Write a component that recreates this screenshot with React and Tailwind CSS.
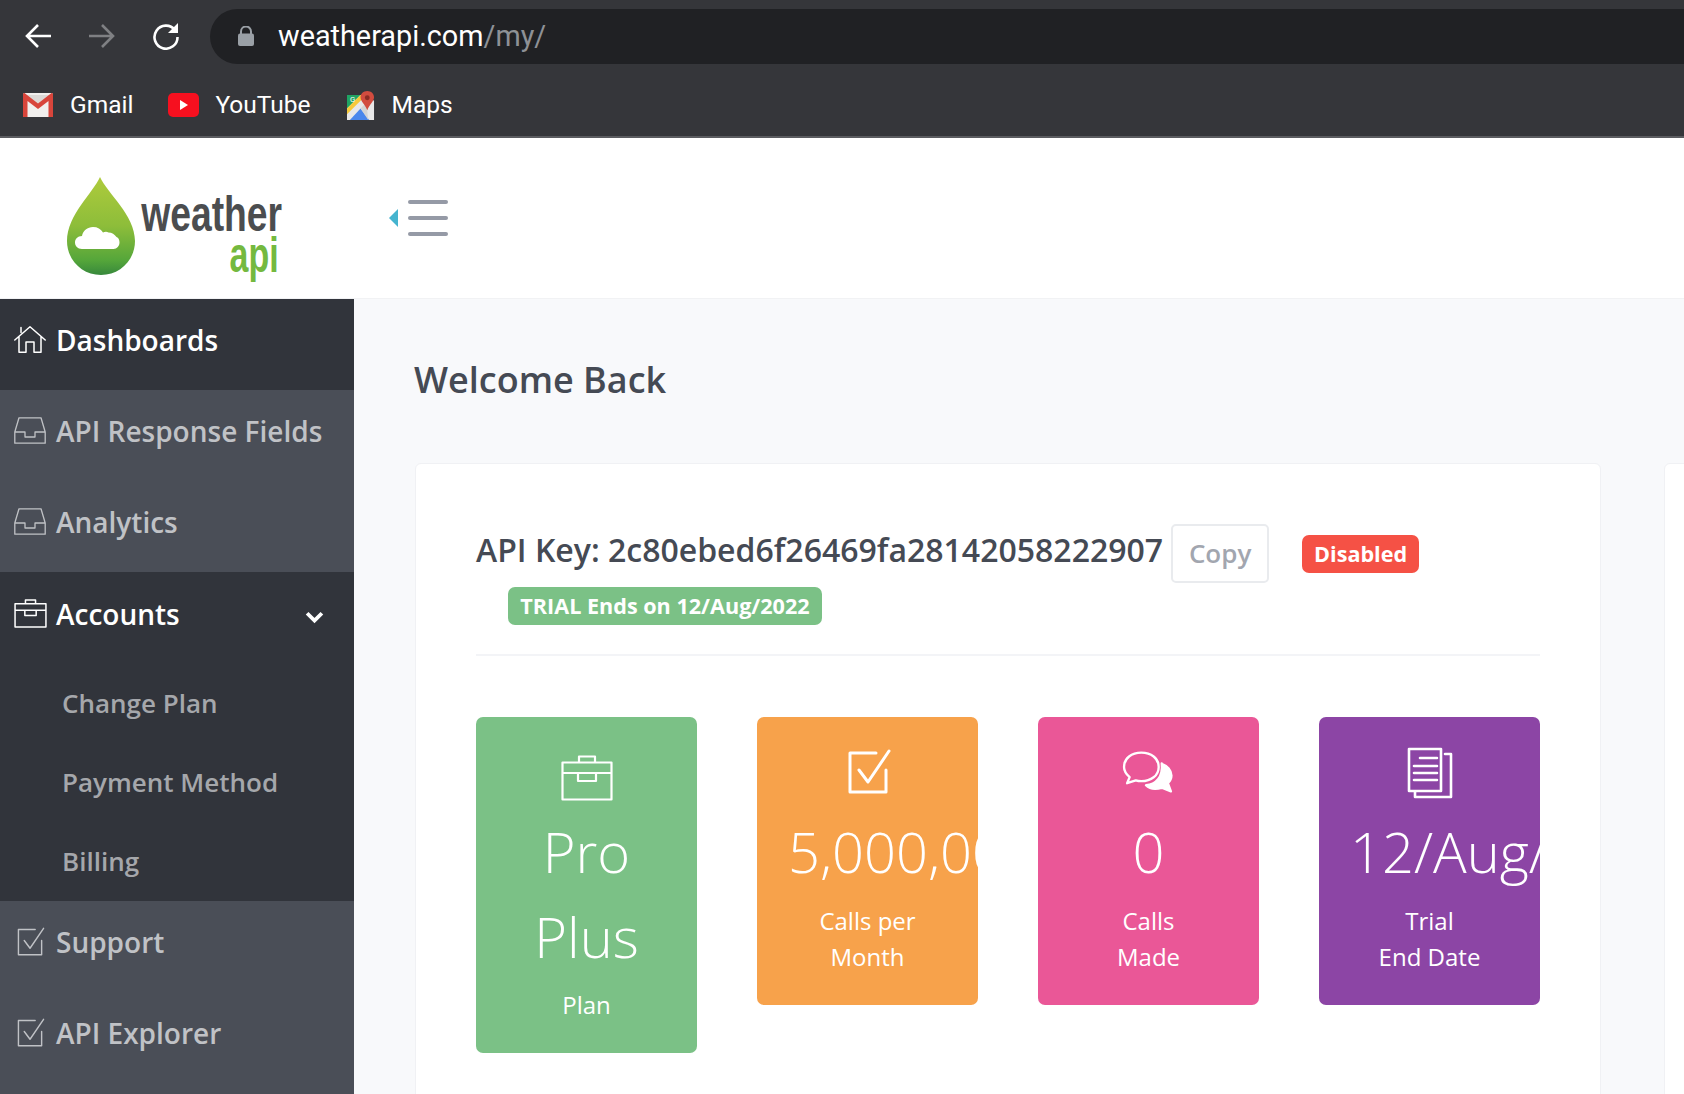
import React from "react";

const Stroke = ({ children, className, vb, sw }) => (
  <svg viewBox={vb} className={className} fill="none" stroke="currentColor" strokeWidth={sw} strokeLinecap="round" strokeLinejoin="round">{children}</svg>
);

const Home = ({ className, sw = 1.500 }) => (
  <Stroke className={className} vb="0 0 32 27" sw={sw}><path d="M.8 14 16 .8 31.200 14M7 6.500V1.500M5 10.500V26.200h7V16h8v10.200h7V10.500" /></Stroke>
);
const Inbox = ({ className, sw = 1.300 }) => (
  <Stroke className={className} vb="0 0 32 27" sw={sw}><path d="M.8 15 5 .8h22L31.200 15v11.200H.8zM.8 15H11v5h10v-5h10.200" /></Stroke>
);
const Case = ({ className, sw = 2.400 }) => (
  <Stroke className={className} vb="0 0 52 46" sw={sw}><path d="M1.500 7.500h49v37h-49zM1.500 18h49M18 7.500V1.500h16v6M17 18v8h18v-8" /></Stroke>
);
const Check = ({ className, sw = 2.200 }) => (
  <Stroke className={className} vb="0 0 43 45" sw={sw}><path d="M28 4H2v39h36V21" /><path d="M11 21l9 12L41 2" /></Stroke>
);
const Chat = ({ className }) => (
  <Stroke className={className} vb="0 0 52 44" sw={2.300}>
    <path d="M19 2c9.500 0 17 5.500 17 14s-7.500 14-17 14c-2 0-4-.3-5.500-.8L5 32l2.500-6C4 23 2 20 2 16 2 7.500 9.500 2 19 2z" />
    <path d="M39 13c5.500 2 9.500 6.500 9.500 11.500 0 3-1.300 5.500-3.500 7.500l3 8-9-3.500c-5 1.500-11.500 1.500-15.500-2.500 9.500-.5 17-8 15.500-21.500z" fill="currentColor" />
  </Stroke>
);
const Doc = ({ className }) => (
  <Stroke className={className} vb="0 0 46 52" sw={2.600}>
    <path d="M2 2h32v42H2zM38 7h6v43H8v-6" />
    <path d="M13 11h17M7 19h23M7 26h23M7 33h23" />
  </Stroke>
);

const Gmail = () => (
  <svg viewBox="0 0 30 24" className="w-[30px] h-[24px]">
    <rect width="30" height="24" rx="1.500" fill="#f1efed" />
    <path d="M3 2 15 13 27 2" fill="#dcd9d6" />
    <path d="M0 1.500C0 .5.7 0 1.500 0L15 10.500 28.500 0C29.300 0 30 .5 30 1.500V24h-4.500V8L15 16 4.500 8v16H0z" fill="#d8453b" />
  </svg>
);
const YouTube = () => (
  <svg viewBox="0 0 31 24" className="w-[31px] h-[24px]">
    <rect width="31" height="24" rx="5" fill="#f6101f" />
    <path d="M12 7l8 5-8 5z" fill="#fff" />
  </svg>
);
const Maps = () => (
  <svg viewBox="0 0 29 30" className="w-[28px] h-[29px]">
    <path d="M0 4h20l8 6v20H0z" fill="#e8e8e8" />
    <path d="M0 4h14L0 18z" fill="#1fa463" />
    <path d="M0 18 14 4h6L0 24z" fill="#f6c93a" />
    <path d="M3 30l11-12 9 12z" fill="#4a87ec" />
    <path d="M14 18 20 12l2 18z" fill="#d4d4d4" />
    <path d="M21 0c4 0 7 3 7 6.500C28 11 23 14 21 20c-2-6-7-9-7-13.500C14 3 17 0 21 0z" fill="#d24c3f" />
    <circle cx="21" cy="7" r="2.500" fill="#8c2c24" />
    <text x="3" y="11" fontSize="8" fontFamily="Roboto, sans-serif" fill="#fff">G</text>
  </svg>
);

const Drop = () => (
  <svg viewBox="0 0 68 98" className="w-[68px] h-[98px]">
    <defs>
      <linearGradient id="dropGrad" x1="0" y1="0" x2="0" y2="1">
        <stop offset="0" stopColor="#aecb3c" />
        <stop offset="0.5" stopColor="#8dbd3a" />
        <stop offset="0.85" stopColor="#55a63a" />
        <stop offset="1" stopColor="#37883c" />
      </linearGradient>
    </defs>
    <path d="M33 0C40 16 68 38 68 64c0 19-15 34-34 34S0 83 0 64C0 38 26 16 33 0z" fill="url(#dropGrad)" />
    <path d="M15 72c-4.500 0-7-3-7-6.500s2.500-6.500 7-6.500c1-5.500 5.500-9 11-9 4.500 0 8 2 10 5.500 2-1 4-1 5.500 0 3.500 0 6 2 8 4.500 2 .8 3 3 3 5.500 0 3.500-2.500 6.500-6 6.500z" fill="#fff" />
  </svg>
);

const SideItem = ({ icon: Icon, label, active, iconClass = "w-[32px] h-[27px] ml-[14px]", gap = "ml-[10px]", pb = "pb-[10px]", chevron }) => (
  <div className={`h-[91px] flex items-center ${pb} ${active ? "text-white" : "text-[#c0c2c6]"}`}>
    <Icon className={`${iconClass} shrink-0`} />
    <span className={`${gap} text-[28px] leading-[38px]`}>{label}</span>
    {chevron && (
      <svg viewBox="0 0 18 12" className="w-[19px] h-[13px] ml-auto mr-[30px] mt-[8px]" fill="none" stroke="#fff" strokeWidth="3.600">
        <path d="M2 2l7 7 7-7" />
      </svg>
    )}
  </div>
);

const SubItem = ({ label }) => (
  <div className="h-[79px] flex items-center pl-[62px] pt-[1px] text-[26px] text-[#a5a7ab]">{label}</div>
);

const tiles = [
  { bg: "bg-[#7bc186]", value: "Pro Plus", wrap: true, lines: ["Plan"], icon: <Case className="w-[52px] h-[46px] mt-[9px]" sw={2.200} />, h: "h-[336px]", gap: "mt-[8px]" },
  { bg: "bg-[#f7a24b]", value: "5,000,000", lines: ["Calls per", "Month"], icon: <Check className="w-[43px] h-[45px] ml-[4px] mb-[4px]" sw={3} />, h: "h-[288px]", gap: "mt-[9px]" },
  { bg: "bg-[#ea5797]", value: "0", lines: ["Calls", "Made"], icon: <Chat className="w-[53px] h-[46px]" />, h: "h-[288px]", gap: "mt-[9px]" },
  { bg: "bg-[#8c45a5]", value: "12/Aug/2022", lines: ["Trial", "End Date"], icon: <Doc className="w-[46px] h-[52px]" />, h: "h-[288px]", gap: "mt-[9px]" },
];

export default function App() {
  return (
    <div className="w-[1684px] h-[1094px] overflow-hidden flex flex-col bg-[#f8f9fb] font-['Open_Sans',sans-serif]">
      {/* Browser chrome */}
      <div className="h-[138px] shrink-0 bg-[#35363a] border-b-2 border-[#5b5c60] font-['Roboto',sans-serif] text-white">
        <div className="h-[72px] flex items-center">
          <svg viewBox="0 0 28 28" className="w-[28px] h-[28px] ml-[24px]" fill="none" stroke="#fff" strokeWidth="2.600"><path d="M27 14H3M14 3 3 14l11 11" /></svg>
          <svg viewBox="0 0 28 28" className="w-[28px] h-[28px] ml-[36px]" fill="none" stroke="#7f8083" strokeWidth="2.600"><path d="M1 14h24M14 3l11 11-11 11" /></svg>
          <svg viewBox="0 0 28 28" className="w-[28px] h-[28px] ml-[36px]" fill="none" stroke="#fff" strokeWidth="2.600"><path d="M23 8a11.500 11.500 0 1 0 2.500 7" /><path d="M26 1v10H16z" fill="#fff" stroke="none" /></svg>
          <div className="ml-[30px] flex-1 h-[55px] rounded-l-[28px] bg-[#202124] flex items-center">
            <svg viewBox="0 0 16 20" className="w-[16px] h-[20px] ml-[28px]"><path d="M3 8V5.500a5 5 0 0 1 10 0V8" fill="none" stroke="#9aa0a6" strokeWidth="2" /><rect y="7.500" width="16" height="12.500" rx="2" fill="#9aa0a6" /></svg>
            <span className="ml-[24px] pt-[2px] text-[28.800px]">weatherapi.com<span className="text-[#8e9196]">/my/</span></span>
          </div>
        </div>
        <div className="h-[64px] pt-[2px] flex items-center pl-[23px] text-[24.500px]">
          <Gmail />
          <span className="ml-[17px]">Gmail</span>
          <span className="ml-[35px]"><YouTube /></span>
          <span className="ml-[16px]">YouTube</span>
          <span className="ml-[36px]"><Maps /></span>
          <span className="ml-[17px]">Maps</span>
        </div>
      </div>

      {/* App header */}
      <div className="h-[161px] shrink-0 bg-white flex items-center border-b border-[#f1f2f4]">
        <div className="w-[389px] flex items-start h-full pl-[67px] pt-[39px] shrink-0">
          <Drop />
          <div className="ml-[6px] w-[141px] mt-[15px] font-['Liberation_Sans',sans-serif] font-bold">
            <div className="flex justify-end text-[50px] leading-[44px] text-[#4b4d4f] origin-right scale-x-[0.745] whitespace-nowrap">weather</div>
            <div className="flex justify-end text-[50px] leading-[38px] text-[#74b93f] pr-[5px] origin-right scale-x-[0.68] whitespace-nowrap">api</div>
          </div>
        </div>
        <div className="flex items-center">
          <div className="w-0 h-0 border-y-[9px] border-y-transparent border-r-[9px] border-r-[#45b4cf]" />
          <div className="ml-[10px] w-[40px] flex flex-col gap-[12px]">
            <div className="h-[4px] rounded-full bg-[#959aa6]" />
            <div className="h-[4px] rounded-full bg-[#959aa6]" />
            <div className="h-[4px] rounded-full bg-[#959aa6]" />
          </div>
        </div>
      </div>

      <div className="flex-1 flex min-h-0">
        {/* Sidebar */}
        <div className="w-[354px] shrink-0 bg-[#4a4e57] font-semibold">
          <div className="bg-[#31343b]">
            <SideItem icon={Home} label="Dashboards" active />
          </div>
          <SideItem icon={Inbox} label="API Response Fields" />
          <SideItem icon={Inbox} label="Analytics" />
          <div className="bg-[#31343b] pb-[1px]">
            <SideItem icon={Case} label="Accounts" active chevron pb="pb-[8px]" iconClass="w-[33px] h-[29px] ml-[14px]" gap="ml-[9px]" />
            <SubItem label="Change Plan" />
            <SubItem label="Payment Method" />
            <SubItem label="Billing" />
          </div>
          <SideItem icon={Check} label="Support" iconClass="w-[28px] h-[29px] ml-[17px]" gap="ml-[11px]" />
          <SideItem icon={Check} label="API Explorer" iconClass="w-[28px] h-[29px] ml-[17px]" gap="ml-[11px]" />
        </div>

        {/* Main */}
        <div className="flex-1 min-w-0 pl-[60px] overflow-hidden">
          <h1 className="mt-[56px] text-[36px] leading-[50px] font-semibold text-[#454a54]">Welcome Back</h1>
          <div className="mt-[58px] ml-[1px] flex gap-[63px] w-[1400px]">
            <div className="w-[1186px] h-[800px] shrink-0 bg-white border border-[#f0f1f4] rounded-[6px] pt-[56px] px-[60px]">
              <div className="flex flex-wrap content-start items-start border-b-2 border-[#f3f4f7] h-[136px]">
                <span className="text-[32px] leading-[60px] text-[#454a54] font-semibold whitespace-nowrap">API Key: 2c80ebed6f26469fa28142058222907</span>
                <span className="ml-[8px] mt-[4px] w-[98px] h-[59px] rounded-[5px] border-2 border-[#e9ebee] flex items-center justify-center text-[26px] text-[#a2a6af] font-semibold">Copy</span>
                <span className="ml-[33px] mt-[15px] w-[117px] h-[38px] rounded-[7px] bg-[#f55145] flex items-center justify-center text-[21.600px] text-white font-bold">Disabled</span>
                <span className="ml-[32px] mt-[4px] w-[314px] h-[38px] rounded-[7px] bg-[#7bc186] flex items-center justify-center text-[21.600px] text-white font-bold whitespace-nowrap">TRIAL Ends on 12/Aug/2022</span>
              </div>
              <div className="mt-[61px] grid grid-cols-4 gap-[60px] items-start">
                {tiles.map((t) => (
                  <div key={t.value} className={`${t.bg} ${t.h} rounded-[7px] overflow-hidden px-[31px] pt-[28px] text-white text-center`}>
                    <div className="h-[56px] flex items-center justify-center">{t.icon}</div>
                    <div className={`mt-[8px] text-[56px] leading-[85px] font-light ${t.wrap ? "" : "whitespace-nowrap"}`}>{t.value}</div>
                    <div className={`${t.gap} text-[24px] leading-[36px] font-normal`}>
                      {t.lines.map((l) => <div key={l} className="whitespace-nowrap">{l}</div>)}
                    </div>
                  </div>
                ))}
              </div>
            </div>
            <div className="w-[300px] h-[800px] shrink-0 bg-white border border-[#f0f1f4] rounded-[6px]" />
          </div>
        </div>
      </div>
    </div>
  );
}
